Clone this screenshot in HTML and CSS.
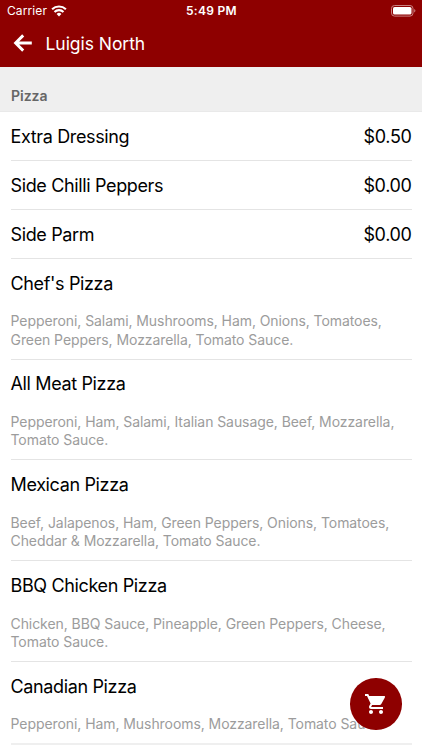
FILE: index.html
```html
<!DOCTYPE html>
<html lang="en">
<head>
    <meta charset="UTF-8">
    <meta name="viewport" content="width=device-width, initial-scale=1.0">
    <title>Luigis North</title>
    <link rel="stylesheet" href="styles.css">
</head>
<body>
    <header class="header">
        <div class="status-bar">
            <div class="carrier">
                <span>Carrier</span>
                <svg class="wifi" width="16" height="12" viewBox="0 0 16 12" fill="none" stroke="#fff" stroke-width="2.1">
                    <path d="M1.1 4.3a10 10 0 0 1 13.8 0M3.5 6.9a6.5 6.5 0 0 1 9 0"/>
                    <path d="M8 11.4 5.6 9a3.5 3.5 0 0 1 4.8 0z" fill="#fff" stroke="none"/>
                </svg>
            </div>
            <span class="time">5:49 PM</span>
            <svg class="battery" width="25" height="12" viewBox="0 0 25 12">
                <rect x=".5" y=".5" width="21.5" height="10.6" rx="3" fill="none" stroke="#c98080"/>
                <rect x="2" y="2" width="18.5" height="7.6" rx="1.6" fill="#fff"/>
                <path d="M23.2 4v3.6q1.2-.5 1.2-1.8T23.2 4z" fill="#c98080"/>
            </svg>
        </div>
        <div class="nav-bar">
            <svg class="back" width="20" height="18" viewBox="0 0 20 18" fill="none" stroke="#fff" stroke-width="2.9">
                <path d="M18.8 9H2.6M10.2 1.4 2.6 9l7.6 7.6"/>
            </svg>
            <span class="title">Luigis North</span>
        </div>
    </header>

    <h2 class="section">Pizza</h2>

    <!-- Menu items -->
    <ul class="menu">
        <li class="item simple"><span class="name">Extra Dressing</span><span class="price">$0.50</span></li>
        <li class="item simple"><span class="name">Side Chilli Peppers</span><span class="price">$0.00</span></li>
        <li class="item simple"><span class="name">Side Parm</span><span class="price">$0.00</span></li>
        <li class="item">
            <div class="name">Chef's Pizza</div>
            <p class="desc">Pepperoni, Salami, Mushrooms, Ham, Onions, Tomatoes, Green Peppers, Mozzarella, Tomato Sauce.</p>
        </li>
        <li class="item">
            <div class="name">All Meat Pizza</div>
            <p class="desc">Pepperoni, Ham, Salami, Italian Sausage, Beef, Mozzarella, Tomato Sauce.</p>
        </li>
        <li class="item">
            <div class="name">Mexican Pizza</div>
            <p class="desc">Beef, Jalapenos, Ham, Green Peppers, Onions, Tomatoes, Cheddar &amp; Mozzarella, Tomato Sauce.</p>
        </li>
        <li class="item">
            <div class="name">BBQ Chicken Pizza</div>
            <p class="desc">Chicken, BBQ Sauce, Pineapple, Green Peppers, Cheese, Tomato Sauce.</p>
        </li>
        <li class="item short">
            <div class="name">Canadian Pizza</div>
            <p class="desc">Pepperoni, Ham, Mushrooms, Mozzarella, Tomato Sauce.</p>
        </li>
    </ul>

    <button class="cart" aria-label="Cart">
        <svg width="24" height="24" viewBox="0 0 24 24" fill="#fff">
            <path d="M7 18c-1.1 0-1.99.9-1.99 2S5.9 22 7 22s2-.9 2-2-.9-2-2-2zM1 2v2h2l3.6 7.59-1.35 2.45c-.16.28-.25.61-.25.96 0 1.1.9 2 2 2h12v-2H7.42c-.14 0-.25-.11-.25-.25l.03-.12.9-1.63h7.45c.75 0 1.41-.41 1.75-1.03l3.58-6.49A1 1 0 0 0 20 4H5.21l-.94-2H1zm16 16c-1.1 0-1.99.9-1.99 2s.89 2 1.99 2 2-.9 2-2-.9-2-2-2z"/>
        </svg>
    </button>
</body>
</html>
```
FILE: styles.css
```css
* {
    box-sizing: border-box;
}

body {
    margin: 0;
    height: 750px;
    overflow: hidden;
    background-color: #fff;
    color: #000;
    font-family: Inter, 'Liberation Sans', sans-serif;
}

.header {
    height: 66.5px;
    background-color: #8e0000;
    color: #fff;
}

.status-bar {
    display: grid;
    grid-template-columns: 1fr auto 1fr;
    align-items: center;
    height: 21px;
    padding: 0 6px 0 7px;
    font-size: 12px;
    letter-spacing: 0.1px;
}

.carrier {
    display: flex;
    align-items: center;
    gap: 4px;
}

.time {
    font-weight: 600;
    letter-spacing: 0.3px;
}

.battery {
    justify-self: end;
}

.nav-bar {
    display: flex;
    align-items: center;
    height: 44px;
    padding-left: 13px;
    gap: 12.5px;
}

.title {
    font-size: 17.5px;
    letter-spacing: -0.05px;
}

.section {
    height: 45px;
    margin: 0;
    padding: 19px 11px 0;
    background-color: #efefef;
    border-bottom: 1px solid #e9e9e9;
    color: #666;
    font-size: 14px;
    font-weight: 600;
    line-height: 20px;
}

.menu {
    list-style: none;
    margin: 0;
    padding: 0.7px 10.5px 0;
}

.item {
    height: 100.8px;
    padding-top: 12.7px;
    border-bottom: 1px solid #e4e4e4;
}

.simple {
    display: flex;
    justify-content: space-between;
    height: 48.9px;
}

.short {
    height: 83px;
    border-bottom-width: 2px;
    border-color: #efefef;
}

.name, .price {
    font-size: 18px;
    line-height: 24px;
    letter-spacing: -0.36px;
}

.desc {
    margin: 16.7px 0 0;
    color: #9c9c9c;
    font-size: 14px;
    line-height: 18.3px;
    letter-spacing: -0.07px;
}

/* Floating cart button */
.cart {
    position: fixed;
    right: 20.5px;
    bottom: 20.5px;
    display: flex;
    align-items: center;
    justify-content: center;
    width: 51.5px;
    height: 51.5px;
    padding: 0;
    border: none;
    border-radius: 50%;
    background-color: #8e0000;
}
```
